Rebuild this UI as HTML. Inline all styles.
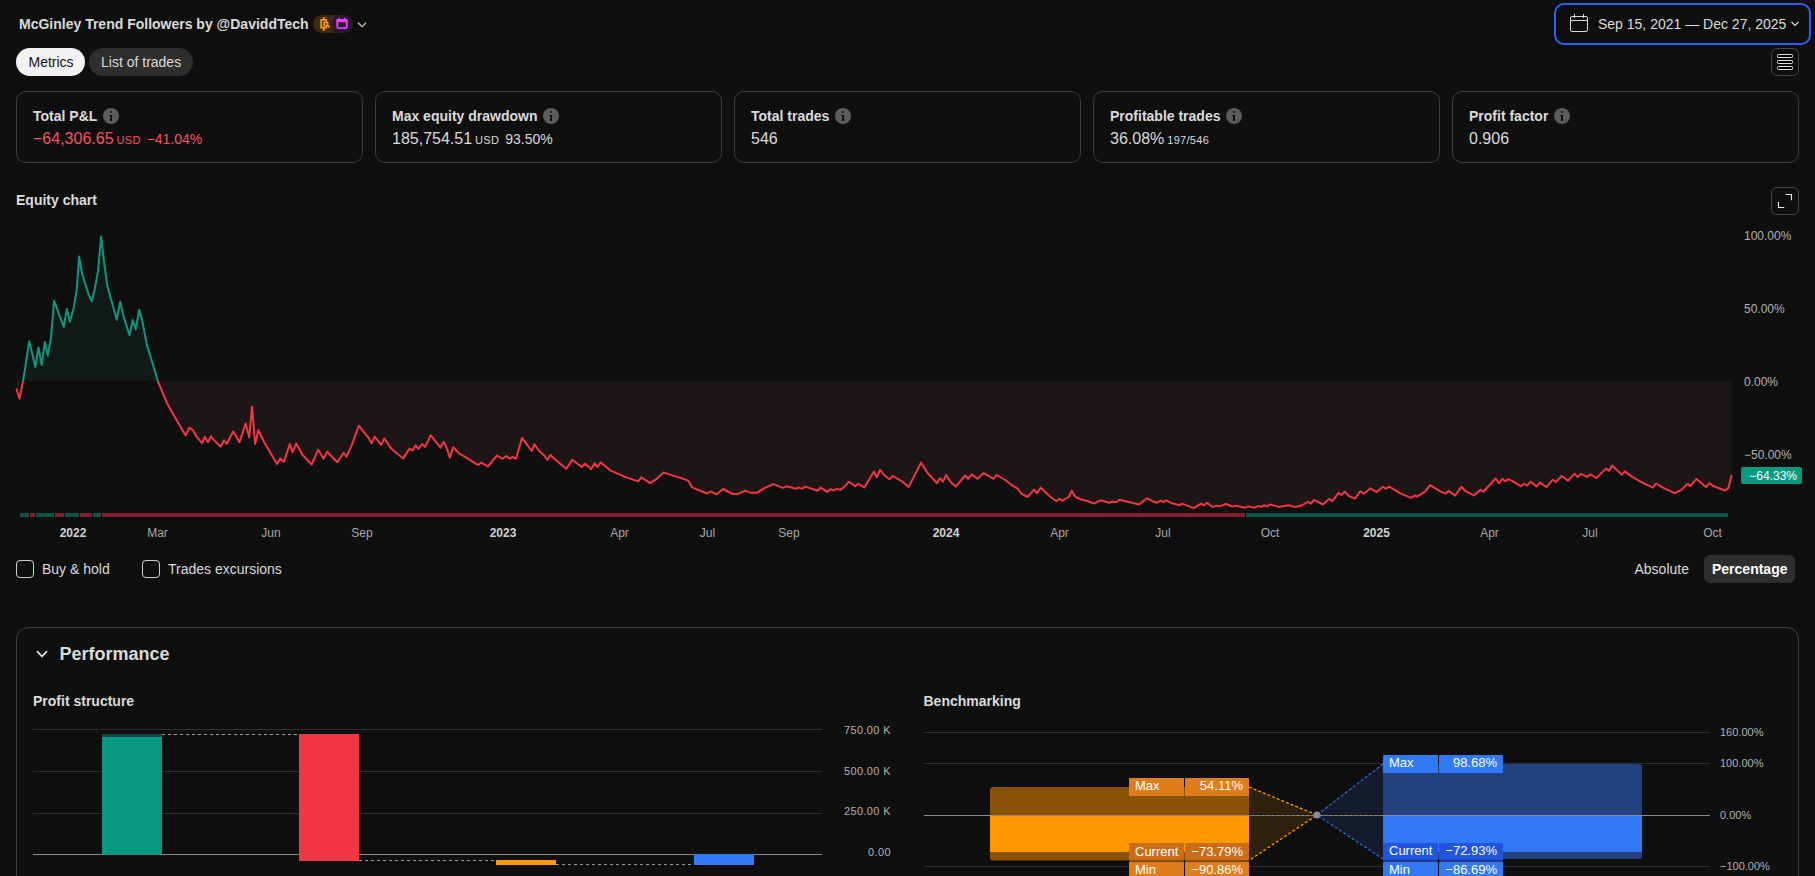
<!DOCTYPE html>
<html><head><meta charset="utf-8"><title>Strategy report</title>
<style>
html,body{margin:0;padding:0;background:#0f0f0f;width:1815px;height:876px;overflow:hidden;position:relative;font-family:"Liberation Sans", sans-serif;}
.t{position:absolute;white-space:nowrap;}
.info{display:inline-block;width:16px;height:16px;border-radius:50%;background:#5c5c5c;margin-left:6px;vertical-align:-3px;position:relative;}
.info:before{content:"";position:absolute;left:7px;top:3.3px;width:2px;height:2px;background:#111;border-radius:1px}
.info:after{content:"";position:absolute;left:5.8px;top:7.3px;width:3.2px;height:5.5px;background:linear-gradient(#111,#111) left top/1.3px 1.2px no-repeat,linear-gradient(#111,#111) right top/2px 100% no-repeat}
</style></head><body>
<div class="t" style="left:19px;top:17.15px;font-size:14px;line-height:14px;font-weight:700;color:#dbdbdb;">McGinley Trend Followers by @DaviddTech</div>
<div style="position:absolute;left:313px;top:15px;width:40px;height:18px;box-sizing:border-box;border-radius:9px;background:linear-gradient(90deg,#3a2a0e 50%,#2e1733 50%)"></div>
<svg style="position:absolute;left:313px;top:15px" width="40" height="18" viewBox="0 0 40 18">
<g fill="none" stroke="#ff9800" stroke-width="1.8">
<path d="M10.8 1.9 V4.9 M14.1 4.9 H8.2 V12.7 H14.1 M10.8 12.7 V15.9"/>
<circle cx="12.85" cy="8.9" r="1.9"/><line x1="14.3" y1="10.4" x2="16.6" y2="12.3"/>
</g>
<g fill="none" stroke="#e040fb" stroke-width="1.9">
<rect x="24.35" y="4.95" width="9.4" height="8.2" rx="1.2"/>
</g>
<rect x="23.4" y="4.0" width="11.3" height="3.3" rx="1" fill="#e040fb"/>
<rect x="25.4" y="2.9" width="1.5" height="1.5" fill="#e040fb"/>
<rect x="31.0" y="2.9" width="1.5" height="1.5" fill="#e040fb"/>
</svg>
<svg style="position:absolute;left:357px;top:20.5px" width="10" height="8" viewBox="0 0 10 8"><path d="M1 1.8 L5 5.6 L9 1.8" fill="none" stroke="#c8c8c8" stroke-width="1.3"/></svg>
<div style="position:absolute;left:1554px;top:3px;width:257px;height:42px;box-sizing:border-box;border:2px solid #2962ff;border-radius:10px"></div>
<svg style="position:absolute;left:1569px;top:13px" width="20" height="20" viewBox="0 0 20 20">
<rect x="1.5" y="3.5" width="17" height="15" rx="1.5" fill="none" stroke="#dbdbdb" stroke-width="1"/>
<line x1="1.5" y1="7.5" x2="18.5" y2="7.5" stroke="#dbdbdb" stroke-width="1"/>
<line x1="5.5" y1="1" x2="5.5" y2="5" stroke="#dbdbdb" stroke-width="1"/>
<line x1="14.5" y1="1" x2="14.5" y2="5" stroke="#dbdbdb" stroke-width="1"/>
</svg>
<div class="t" style="left:1598px;top:17.15px;font-size:14px;line-height:14px;font-weight:400;color:#dbdbdb;">Sep 15, 2021 — Dec 27, 2025</div>
<svg style="position:absolute;left:1790px;top:20px" width="10" height="8" viewBox="0 0 10 8"><path d="M1.5 2 L5 5.5 L8.5 2" fill="none" stroke="#dbdbdb" stroke-width="1.2"/></svg>
<div style="position:absolute;left:16px;top:48px;width:69px;height:28px;box-sizing:border-box;border-radius:14px;background:#f2f2f2"></div>
<div class="t" style="left:28.5px;top:54.65px;font-size:14px;line-height:14px;font-weight:400;color:#131313;">Metrics</div>
<div style="position:absolute;left:89px;top:48px;width:104px;height:28px;box-sizing:border-box;border-radius:14px;background:#2e2e2e"></div>
<div class="t" style="left:101px;top:54.65px;font-size:14px;line-height:14px;font-weight:400;color:#dbdbdb;">List of trades</div>
<div style="position:absolute;left:1771px;top:48px;width:28px;height:28px;box-sizing:border-box;border:1px solid #444;border-radius:6px"></div>
<svg style="position:absolute;left:1771px;top:48px" width="28" height="28" viewBox="0 0 28 28">
<g fill="none" stroke="#e0e0e0" stroke-width="1">
<rect x="6.5" y="6.5" width="15" height="3" rx="0.8" fill="#000"/>
<rect x="6.5" y="12.5" width="15" height="3" rx="0.8" fill="#000"/>
<rect x="6.5" y="18.5" width="15" height="3" rx="0.8" fill="#000"/>
</g></svg>
<div style="position:absolute;left:16px;top:91px;width:347px;height:72px;box-sizing:border-box;border:1px solid #3d3d3d;border-radius:10px"></div>
<div class="t" style="left:33px;top:108.15px;font-size:14px;line-height:14px;font-weight:700;color:#dbdbdb">Total P&amp;L<span class="info"></span></div>
<div class="t" style="left:33px;top:131.46px;font-size:16px;line-height:16px;color:#dbdbdb"><span style="font-size:16px;color:#f7525f;margin-left:0px;">−64,306.65</span><span style="font-size:11px;color:#f7525f;margin-left:3px;letter-spacing:0.3px;">USD</span><span style="font-size:14px;color:#f7525f;margin-left:6px;">−41.04%</span></div>
<div style="position:absolute;left:375px;top:91px;width:347px;height:72px;box-sizing:border-box;border:1px solid #3d3d3d;border-radius:10px"></div>
<div class="t" style="left:392px;top:108.15px;font-size:14px;line-height:14px;font-weight:700;color:#dbdbdb">Max equity drawdown<span class="info"></span></div>
<div class="t" style="left:392px;top:131.46px;font-size:16px;line-height:16px;color:#dbdbdb"><span style="font-size:16px;color:#dbdbdb;margin-left:0px;">185,754.51</span><span style="font-size:11px;color:#dbdbdb;margin-left:3px;letter-spacing:0.3px;">USD</span><span style="font-size:14px;color:#dbdbdb;margin-left:6px;">93.50%</span></div>
<div style="position:absolute;left:734px;top:91px;width:347px;height:72px;box-sizing:border-box;border:1px solid #3d3d3d;border-radius:10px"></div>
<div class="t" style="left:751px;top:108.15px;font-size:14px;line-height:14px;font-weight:700;color:#dbdbdb">Total trades<span class="info"></span></div>
<div class="t" style="left:751px;top:131.46px;font-size:16px;line-height:16px;color:#dbdbdb"><span style="font-size:16px;color:#dbdbdb;margin-left:0px;">546</span></div>
<div style="position:absolute;left:1093px;top:91px;width:347px;height:72px;box-sizing:border-box;border:1px solid #3d3d3d;border-radius:10px"></div>
<div class="t" style="left:1110px;top:108.15px;font-size:14px;line-height:14px;font-weight:700;color:#dbdbdb">Profitable trades<span class="info"></span></div>
<div class="t" style="left:1110px;top:131.46px;font-size:16px;line-height:16px;color:#dbdbdb"><span style="font-size:16px;color:#dbdbdb;margin-left:0px;">36.08%</span><span style="font-size:11px;color:#dbdbdb;margin-left:3px;letter-spacing:0.3px;">197/546</span></div>
<div style="position:absolute;left:1452px;top:91px;width:347px;height:72px;box-sizing:border-box;border:1px solid #3d3d3d;border-radius:10px"></div>
<div class="t" style="left:1469px;top:108.15px;font-size:14px;line-height:14px;font-weight:700;color:#dbdbdb">Profit factor<span class="info"></span></div>
<div class="t" style="left:1469px;top:131.46px;font-size:16px;line-height:16px;color:#dbdbdb"><span style="font-size:16px;color:#dbdbdb;margin-left:0px;">0.906</span></div>
<div class="t" style="left:16px;top:193.15px;font-size:14px;line-height:14px;font-weight:700;color:#dbdbdb;">Equity chart</div>
<div style="position:absolute;left:1771px;top:187px;width:28px;height:28px;box-sizing:border-box;border:1px solid #444;border-radius:6px"></div>
<svg style="position:absolute;left:1771px;top:187px" width="28" height="28" viewBox="0 0 28 28">
<path d="M7.5 15 V20.5 H13.2" fill="none" stroke="#e8e8e8" stroke-width="1.1"/>
<path d="M14.8 7.5 H20.5 V13.2" fill="none" stroke="#e8e8e8" stroke-width="1.1"/>
</svg>
<svg style="position:absolute;left:0;top:0" width="1815" height="560" viewBox="0 0 1815 560">
<defs>
<clipPath id="up"><rect x="0" y="0" width="1815" height="381"/></clipPath>
<clipPath id="dn"><rect x="0" y="381" width="1815" height="200"/></clipPath>
</defs>
<path d="M16.4,388.5 L19.5,398.8 L23.0,381.4 L29.2,341.3 L35.4,367.0 L38.4,347.4 L41.7,365.0 L44.8,342.0 L47.9,355.7 L51.0,337.2 L54.1,300.8 L63.7,326.9 L66.8,309.0 L69.9,321.7 L73.6,308.4 L76.7,289.9 L79.1,256.6 L82.2,274.5 L88.8,295.0 L91.9,301.2 L95.0,287.8 L98.0,271.4 L101.1,236.4 L104.2,263.2 L107.3,285.8 L116.8,319.7 L120.2,301.8 L123.3,315.6 L129.5,335.1 L132.6,320.1 L135.7,329.4 L139.2,309.8 L142.2,320.7 L147.0,345.4 L152.1,361.8 L157.9,381.4 L167.4,403.8 L171.9,412.0 L185.6,435.4 L189.3,427.6 L193.0,430.3 L196.6,436.7 L202.1,443.1 L204.8,436.7 L208.1,442.2 L210.8,436.3 L216.7,443.1 L220.7,446.7 L224.0,440.3 L226.7,444.0 L233.1,431.6 L239.5,442.2 L245.6,423.5 L249.2,437.6 L252.0,406.5 L255.1,444.0 L258.4,430.3 L264.2,442.2 L277.0,464.1 L280.3,458.6 L283.9,461.9 L289.8,444.0 L292.5,452.2 L296.2,443.6 L302.6,455.0 L311.7,464.5 L318.1,449.8 L323.6,458.6 L327.2,451.7 L337.3,462.3 L343.7,452.8 L346.4,456.8 L351.9,444.9 L358.8,425.7 L368.3,437.6 L371.6,443.1 L374.7,436.7 L381.1,444.9 L384.4,438.5 L391.2,448.6 L403.1,458.6 L409.5,448.6 L412.6,450.4 L415.5,445.5 L418.6,448.9 L422.2,444.0 L425.0,447.1 L430.8,435.4 L440.5,447.7 L443.8,441.8 L446.6,448.0 L449.9,457.6 L453.2,447.2 L459.0,453.3 L465.6,457.1 L475.5,463.7 L478.0,464.9 L481.3,462.6 L487.9,466.5 L497.0,455.5 L502.8,458.8 L506.4,456.0 L509.8,458.8 L512.7,456.8 L516.0,458.8 L522.1,437.8 L531.7,451.0 L534.5,444.2 L538.8,450.5 L544.1,455.5 L547.4,459.9 L550.4,455.0 L554.9,459.3 L560.7,464.2 L566.4,468.7 L572.2,459.9 L581.8,467.0 L585.1,463.7 L591.2,469.2 L594.5,463.2 L597.4,467.0 L600.7,462.4 L610.2,470.3 L625.1,476.9 L638.3,481.4 L641.3,477.4 L650.2,483.2 L656.5,479.1 L663.5,472.5 L674.7,476.1 L686.3,479.8 L688.8,481.4 L692.1,487.4 L707.0,493.5 L710.6,491.5 L716.9,494.3 L723.0,489.0 L732.6,494.0 L738.6,493.7 L745.2,490.7 L751.5,492.9 L757.3,492.6 L763.9,488.3 L773.3,484.1 L782.9,487.9 L786.6,486.3 L795.8,488.8 L798.6,487.4 L801.9,488.8 L805.2,486.6 L817.6,490.7 L820.6,487.6 L823.4,489.3 L827.2,492.1 L830.5,489.3 L833.3,490.4 L836.7,488.8 L840.3,489.9 L844.1,487.1 L849.0,481.7 L855.3,486.3 L858.1,483.8 L864.3,487.4 L873.8,471.7 L876.8,477.2 L880.1,469.8 L884.6,475.5 L889.5,479.2 L892.9,476.0 L901.9,481.3 L908.6,487.1 L921.0,462.6 L927.6,473.1 L937.0,483.3 L940.0,478.3 L942.9,481.7 L946.2,475.0 L950.7,482.1 L955.7,486.6 L965.2,475.5 L968.1,478.8 L971.7,474.4 L977.6,478.8 L983.8,473.1 L993.7,478.8 L996.5,475.0 L1005.2,480.0 L1010.7,484.3 L1018.0,488.8 L1021.3,493.7 L1027.6,497.0 L1034.1,489.6 L1036.9,493.2 L1040.7,487.6 L1045.7,492.6 L1050.7,497.0 L1056.4,501.2 L1059.4,498.7 L1062.2,500.7 L1068.8,497.0 L1071.7,490.7 L1075.5,497.0 L1081.2,499.5 L1087.9,501.2 L1094.1,503.6 L1100.2,500.3 L1109.3,502.8 L1112.6,501.5 L1116.0,502.3 L1119.3,499.8 L1139.1,504.5 L1147.0,498.2 L1152.3,501.2 L1156.9,502.8 L1160.6,500.7 L1163.6,502.0 L1165.9,500.3 L1172.1,503.3 L1179.6,505.3 L1182.1,503.6 L1193.6,508.1 L1201.1,503.6 L1203.9,505.3 L1206.9,502.8 L1212.6,506.9 L1216.8,505.6 L1219.3,506.4 L1225.9,504.0 L1232.5,506.6 L1235.8,505.6 L1244.9,507.8 L1248.2,506.4 L1254.0,507.8 L1258.1,506.1 L1261.4,506.9 L1263.9,505.3 L1267.2,506.4 L1269.7,504.5 L1278.8,506.9 L1288.7,505.3 L1294.5,506.9 L1301.1,505.8 L1307.7,502.0 L1311.0,503.6 L1314.0,499.8 L1322.9,504.5 L1329.1,499.0 L1332.4,501.2 L1338.6,492.9 L1341.5,495.0 L1344.8,491.6 L1349.0,496.2 L1354.8,498.7 L1360.5,491.2 L1363.8,493.7 L1370.5,488.3 L1376.6,492.1 L1382.9,486.8 L1385.8,488.8 L1389.1,486.6 L1401.0,493.7 L1411.0,497.9 L1415.1,495.4 L1417.2,496.7 L1425.0,491.6 L1430.0,485.1 L1440.7,491.6 L1445.7,493.7 L1448.6,490.9 L1455.1,495.7 L1461.4,486.8 L1465.5,491.2 L1473.8,495.4 L1480.7,489.9 L1483.3,491.7 L1495.6,478.5 L1498.9,483.3 L1502.2,478.8 L1505.2,481.3 L1508.5,479.2 L1513.4,481.7 L1520.9,486.3 L1524.2,483.8 L1527.0,485.5 L1530.8,481.7 L1536.6,486.6 L1539.9,482.6 L1546.5,487.1 L1552.8,479.7 L1555.6,482.1 L1561.7,476.0 L1568.0,480.8 L1574.6,473.6 L1577.9,477.2 L1580.9,473.9 L1587.0,476.9 L1590.3,474.4 L1596.4,478.0 L1606.0,468.6 L1609.0,470.9 L1612.1,465.6 L1621.8,474.7 L1624.9,471.4 L1632.1,476.9 L1643.7,483.3 L1653.0,487.6 L1656.0,483.5 L1662.4,487.4 L1674.5,493.1 L1681.1,490.1 L1687.5,483.9 L1690.3,486.1 L1696.5,478.9 L1706.2,487.2 L1709.4,483.0 L1712.5,485.7 L1725.0,490.5 L1728.5,487.9 L1731.6,475.0 L1731.6,381 L16.4,381 Z" fill="#121a19" clip-path="url(#up)"/>
<path d="M16.4,388.5 L19.5,398.8 L23.0,381.4 L29.2,341.3 L35.4,367.0 L38.4,347.4 L41.7,365.0 L44.8,342.0 L47.9,355.7 L51.0,337.2 L54.1,300.8 L63.7,326.9 L66.8,309.0 L69.9,321.7 L73.6,308.4 L76.7,289.9 L79.1,256.6 L82.2,274.5 L88.8,295.0 L91.9,301.2 L95.0,287.8 L98.0,271.4 L101.1,236.4 L104.2,263.2 L107.3,285.8 L116.8,319.7 L120.2,301.8 L123.3,315.6 L129.5,335.1 L132.6,320.1 L135.7,329.4 L139.2,309.8 L142.2,320.7 L147.0,345.4 L152.1,361.8 L157.9,381.4 L167.4,403.8 L171.9,412.0 L185.6,435.4 L189.3,427.6 L193.0,430.3 L196.6,436.7 L202.1,443.1 L204.8,436.7 L208.1,442.2 L210.8,436.3 L216.7,443.1 L220.7,446.7 L224.0,440.3 L226.7,444.0 L233.1,431.6 L239.5,442.2 L245.6,423.5 L249.2,437.6 L252.0,406.5 L255.1,444.0 L258.4,430.3 L264.2,442.2 L277.0,464.1 L280.3,458.6 L283.9,461.9 L289.8,444.0 L292.5,452.2 L296.2,443.6 L302.6,455.0 L311.7,464.5 L318.1,449.8 L323.6,458.6 L327.2,451.7 L337.3,462.3 L343.7,452.8 L346.4,456.8 L351.9,444.9 L358.8,425.7 L368.3,437.6 L371.6,443.1 L374.7,436.7 L381.1,444.9 L384.4,438.5 L391.2,448.6 L403.1,458.6 L409.5,448.6 L412.6,450.4 L415.5,445.5 L418.6,448.9 L422.2,444.0 L425.0,447.1 L430.8,435.4 L440.5,447.7 L443.8,441.8 L446.6,448.0 L449.9,457.6 L453.2,447.2 L459.0,453.3 L465.6,457.1 L475.5,463.7 L478.0,464.9 L481.3,462.6 L487.9,466.5 L497.0,455.5 L502.8,458.8 L506.4,456.0 L509.8,458.8 L512.7,456.8 L516.0,458.8 L522.1,437.8 L531.7,451.0 L534.5,444.2 L538.8,450.5 L544.1,455.5 L547.4,459.9 L550.4,455.0 L554.9,459.3 L560.7,464.2 L566.4,468.7 L572.2,459.9 L581.8,467.0 L585.1,463.7 L591.2,469.2 L594.5,463.2 L597.4,467.0 L600.7,462.4 L610.2,470.3 L625.1,476.9 L638.3,481.4 L641.3,477.4 L650.2,483.2 L656.5,479.1 L663.5,472.5 L674.7,476.1 L686.3,479.8 L688.8,481.4 L692.1,487.4 L707.0,493.5 L710.6,491.5 L716.9,494.3 L723.0,489.0 L732.6,494.0 L738.6,493.7 L745.2,490.7 L751.5,492.9 L757.3,492.6 L763.9,488.3 L773.3,484.1 L782.9,487.9 L786.6,486.3 L795.8,488.8 L798.6,487.4 L801.9,488.8 L805.2,486.6 L817.6,490.7 L820.6,487.6 L823.4,489.3 L827.2,492.1 L830.5,489.3 L833.3,490.4 L836.7,488.8 L840.3,489.9 L844.1,487.1 L849.0,481.7 L855.3,486.3 L858.1,483.8 L864.3,487.4 L873.8,471.7 L876.8,477.2 L880.1,469.8 L884.6,475.5 L889.5,479.2 L892.9,476.0 L901.9,481.3 L908.6,487.1 L921.0,462.6 L927.6,473.1 L937.0,483.3 L940.0,478.3 L942.9,481.7 L946.2,475.0 L950.7,482.1 L955.7,486.6 L965.2,475.5 L968.1,478.8 L971.7,474.4 L977.6,478.8 L983.8,473.1 L993.7,478.8 L996.5,475.0 L1005.2,480.0 L1010.7,484.3 L1018.0,488.8 L1021.3,493.7 L1027.6,497.0 L1034.1,489.6 L1036.9,493.2 L1040.7,487.6 L1045.7,492.6 L1050.7,497.0 L1056.4,501.2 L1059.4,498.7 L1062.2,500.7 L1068.8,497.0 L1071.7,490.7 L1075.5,497.0 L1081.2,499.5 L1087.9,501.2 L1094.1,503.6 L1100.2,500.3 L1109.3,502.8 L1112.6,501.5 L1116.0,502.3 L1119.3,499.8 L1139.1,504.5 L1147.0,498.2 L1152.3,501.2 L1156.9,502.8 L1160.6,500.7 L1163.6,502.0 L1165.9,500.3 L1172.1,503.3 L1179.6,505.3 L1182.1,503.6 L1193.6,508.1 L1201.1,503.6 L1203.9,505.3 L1206.9,502.8 L1212.6,506.9 L1216.8,505.6 L1219.3,506.4 L1225.9,504.0 L1232.5,506.6 L1235.8,505.6 L1244.9,507.8 L1248.2,506.4 L1254.0,507.8 L1258.1,506.1 L1261.4,506.9 L1263.9,505.3 L1267.2,506.4 L1269.7,504.5 L1278.8,506.9 L1288.7,505.3 L1294.5,506.9 L1301.1,505.8 L1307.7,502.0 L1311.0,503.6 L1314.0,499.8 L1322.9,504.5 L1329.1,499.0 L1332.4,501.2 L1338.6,492.9 L1341.5,495.0 L1344.8,491.6 L1349.0,496.2 L1354.8,498.7 L1360.5,491.2 L1363.8,493.7 L1370.5,488.3 L1376.6,492.1 L1382.9,486.8 L1385.8,488.8 L1389.1,486.6 L1401.0,493.7 L1411.0,497.9 L1415.1,495.4 L1417.2,496.7 L1425.0,491.6 L1430.0,485.1 L1440.7,491.6 L1445.7,493.7 L1448.6,490.9 L1455.1,495.7 L1461.4,486.8 L1465.5,491.2 L1473.8,495.4 L1480.7,489.9 L1483.3,491.7 L1495.6,478.5 L1498.9,483.3 L1502.2,478.8 L1505.2,481.3 L1508.5,479.2 L1513.4,481.7 L1520.9,486.3 L1524.2,483.8 L1527.0,485.5 L1530.8,481.7 L1536.6,486.6 L1539.9,482.6 L1546.5,487.1 L1552.8,479.7 L1555.6,482.1 L1561.7,476.0 L1568.0,480.8 L1574.6,473.6 L1577.9,477.2 L1580.9,473.9 L1587.0,476.9 L1590.3,474.4 L1596.4,478.0 L1606.0,468.6 L1609.0,470.9 L1612.1,465.6 L1621.8,474.7 L1624.9,471.4 L1632.1,476.9 L1643.7,483.3 L1653.0,487.6 L1656.0,483.5 L1662.4,487.4 L1674.5,493.1 L1681.1,490.1 L1687.5,483.9 L1690.3,486.1 L1696.5,478.9 L1706.2,487.2 L1709.4,483.0 L1712.5,485.7 L1725.0,490.5 L1728.5,487.9 L1731.6,475.0 L1731.6,381 L16.4,381 Z" fill="#1d1616" clip-path="url(#dn)"/>
<path d="M16.4,388.5 L19.5,398.8 L23.0,381.4 L29.2,341.3 L35.4,367.0 L38.4,347.4 L41.7,365.0 L44.8,342.0 L47.9,355.7 L51.0,337.2 L54.1,300.8 L63.7,326.9 L66.8,309.0 L69.9,321.7 L73.6,308.4 L76.7,289.9 L79.1,256.6 L82.2,274.5 L88.8,295.0 L91.9,301.2 L95.0,287.8 L98.0,271.4 L101.1,236.4 L104.2,263.2 L107.3,285.8 L116.8,319.7 L120.2,301.8 L123.3,315.6 L129.5,335.1 L132.6,320.1 L135.7,329.4 L139.2,309.8 L142.2,320.7 L147.0,345.4 L152.1,361.8 L157.9,381.4 L167.4,403.8 L171.9,412.0 L185.6,435.4 L189.3,427.6 L193.0,430.3 L196.6,436.7 L202.1,443.1 L204.8,436.7 L208.1,442.2 L210.8,436.3 L216.7,443.1 L220.7,446.7 L224.0,440.3 L226.7,444.0 L233.1,431.6 L239.5,442.2 L245.6,423.5 L249.2,437.6 L252.0,406.5 L255.1,444.0 L258.4,430.3 L264.2,442.2 L277.0,464.1 L280.3,458.6 L283.9,461.9 L289.8,444.0 L292.5,452.2 L296.2,443.6 L302.6,455.0 L311.7,464.5 L318.1,449.8 L323.6,458.6 L327.2,451.7 L337.3,462.3 L343.7,452.8 L346.4,456.8 L351.9,444.9 L358.8,425.7 L368.3,437.6 L371.6,443.1 L374.7,436.7 L381.1,444.9 L384.4,438.5 L391.2,448.6 L403.1,458.6 L409.5,448.6 L412.6,450.4 L415.5,445.5 L418.6,448.9 L422.2,444.0 L425.0,447.1 L430.8,435.4 L440.5,447.7 L443.8,441.8 L446.6,448.0 L449.9,457.6 L453.2,447.2 L459.0,453.3 L465.6,457.1 L475.5,463.7 L478.0,464.9 L481.3,462.6 L487.9,466.5 L497.0,455.5 L502.8,458.8 L506.4,456.0 L509.8,458.8 L512.7,456.8 L516.0,458.8 L522.1,437.8 L531.7,451.0 L534.5,444.2 L538.8,450.5 L544.1,455.5 L547.4,459.9 L550.4,455.0 L554.9,459.3 L560.7,464.2 L566.4,468.7 L572.2,459.9 L581.8,467.0 L585.1,463.7 L591.2,469.2 L594.5,463.2 L597.4,467.0 L600.7,462.4 L610.2,470.3 L625.1,476.9 L638.3,481.4 L641.3,477.4 L650.2,483.2 L656.5,479.1 L663.5,472.5 L674.7,476.1 L686.3,479.8 L688.8,481.4 L692.1,487.4 L707.0,493.5 L710.6,491.5 L716.9,494.3 L723.0,489.0 L732.6,494.0 L738.6,493.7 L745.2,490.7 L751.5,492.9 L757.3,492.6 L763.9,488.3 L773.3,484.1 L782.9,487.9 L786.6,486.3 L795.8,488.8 L798.6,487.4 L801.9,488.8 L805.2,486.6 L817.6,490.7 L820.6,487.6 L823.4,489.3 L827.2,492.1 L830.5,489.3 L833.3,490.4 L836.7,488.8 L840.3,489.9 L844.1,487.1 L849.0,481.7 L855.3,486.3 L858.1,483.8 L864.3,487.4 L873.8,471.7 L876.8,477.2 L880.1,469.8 L884.6,475.5 L889.5,479.2 L892.9,476.0 L901.9,481.3 L908.6,487.1 L921.0,462.6 L927.6,473.1 L937.0,483.3 L940.0,478.3 L942.9,481.7 L946.2,475.0 L950.7,482.1 L955.7,486.6 L965.2,475.5 L968.1,478.8 L971.7,474.4 L977.6,478.8 L983.8,473.1 L993.7,478.8 L996.5,475.0 L1005.2,480.0 L1010.7,484.3 L1018.0,488.8 L1021.3,493.7 L1027.6,497.0 L1034.1,489.6 L1036.9,493.2 L1040.7,487.6 L1045.7,492.6 L1050.7,497.0 L1056.4,501.2 L1059.4,498.7 L1062.2,500.7 L1068.8,497.0 L1071.7,490.7 L1075.5,497.0 L1081.2,499.5 L1087.9,501.2 L1094.1,503.6 L1100.2,500.3 L1109.3,502.8 L1112.6,501.5 L1116.0,502.3 L1119.3,499.8 L1139.1,504.5 L1147.0,498.2 L1152.3,501.2 L1156.9,502.8 L1160.6,500.7 L1163.6,502.0 L1165.9,500.3 L1172.1,503.3 L1179.6,505.3 L1182.1,503.6 L1193.6,508.1 L1201.1,503.6 L1203.9,505.3 L1206.9,502.8 L1212.6,506.9 L1216.8,505.6 L1219.3,506.4 L1225.9,504.0 L1232.5,506.6 L1235.8,505.6 L1244.9,507.8 L1248.2,506.4 L1254.0,507.8 L1258.1,506.1 L1261.4,506.9 L1263.9,505.3 L1267.2,506.4 L1269.7,504.5 L1278.8,506.9 L1288.7,505.3 L1294.5,506.9 L1301.1,505.8 L1307.7,502.0 L1311.0,503.6 L1314.0,499.8 L1322.9,504.5 L1329.1,499.0 L1332.4,501.2 L1338.6,492.9 L1341.5,495.0 L1344.8,491.6 L1349.0,496.2 L1354.8,498.7 L1360.5,491.2 L1363.8,493.7 L1370.5,488.3 L1376.6,492.1 L1382.9,486.8 L1385.8,488.8 L1389.1,486.6 L1401.0,493.7 L1411.0,497.9 L1415.1,495.4 L1417.2,496.7 L1425.0,491.6 L1430.0,485.1 L1440.7,491.6 L1445.7,493.7 L1448.6,490.9 L1455.1,495.7 L1461.4,486.8 L1465.5,491.2 L1473.8,495.4 L1480.7,489.9 L1483.3,491.7 L1495.6,478.5 L1498.9,483.3 L1502.2,478.8 L1505.2,481.3 L1508.5,479.2 L1513.4,481.7 L1520.9,486.3 L1524.2,483.8 L1527.0,485.5 L1530.8,481.7 L1536.6,486.6 L1539.9,482.6 L1546.5,487.1 L1552.8,479.7 L1555.6,482.1 L1561.7,476.0 L1568.0,480.8 L1574.6,473.6 L1577.9,477.2 L1580.9,473.9 L1587.0,476.9 L1590.3,474.4 L1596.4,478.0 L1606.0,468.6 L1609.0,470.9 L1612.1,465.6 L1621.8,474.7 L1624.9,471.4 L1632.1,476.9 L1643.7,483.3 L1653.0,487.6 L1656.0,483.5 L1662.4,487.4 L1674.5,493.1 L1681.1,490.1 L1687.5,483.9 L1690.3,486.1 L1696.5,478.9 L1706.2,487.2 L1709.4,483.0 L1712.5,485.7 L1725.0,490.5 L1728.5,487.9 L1731.6,475.0" fill="none" stroke="#089981" stroke-width="2" stroke-linejoin="round" clip-path="url(#up)"/>
<path d="M16.4,388.5 L19.5,398.8 L23.0,381.4 L29.2,341.3 L35.4,367.0 L38.4,347.4 L41.7,365.0 L44.8,342.0 L47.9,355.7 L51.0,337.2 L54.1,300.8 L63.7,326.9 L66.8,309.0 L69.9,321.7 L73.6,308.4 L76.7,289.9 L79.1,256.6 L82.2,274.5 L88.8,295.0 L91.9,301.2 L95.0,287.8 L98.0,271.4 L101.1,236.4 L104.2,263.2 L107.3,285.8 L116.8,319.7 L120.2,301.8 L123.3,315.6 L129.5,335.1 L132.6,320.1 L135.7,329.4 L139.2,309.8 L142.2,320.7 L147.0,345.4 L152.1,361.8 L157.9,381.4 L167.4,403.8 L171.9,412.0 L185.6,435.4 L189.3,427.6 L193.0,430.3 L196.6,436.7 L202.1,443.1 L204.8,436.7 L208.1,442.2 L210.8,436.3 L216.7,443.1 L220.7,446.7 L224.0,440.3 L226.7,444.0 L233.1,431.6 L239.5,442.2 L245.6,423.5 L249.2,437.6 L252.0,406.5 L255.1,444.0 L258.4,430.3 L264.2,442.2 L277.0,464.1 L280.3,458.6 L283.9,461.9 L289.8,444.0 L292.5,452.2 L296.2,443.6 L302.6,455.0 L311.7,464.5 L318.1,449.8 L323.6,458.6 L327.2,451.7 L337.3,462.3 L343.7,452.8 L346.4,456.8 L351.9,444.9 L358.8,425.7 L368.3,437.6 L371.6,443.1 L374.7,436.7 L381.1,444.9 L384.4,438.5 L391.2,448.6 L403.1,458.6 L409.5,448.6 L412.6,450.4 L415.5,445.5 L418.6,448.9 L422.2,444.0 L425.0,447.1 L430.8,435.4 L440.5,447.7 L443.8,441.8 L446.6,448.0 L449.9,457.6 L453.2,447.2 L459.0,453.3 L465.6,457.1 L475.5,463.7 L478.0,464.9 L481.3,462.6 L487.9,466.5 L497.0,455.5 L502.8,458.8 L506.4,456.0 L509.8,458.8 L512.7,456.8 L516.0,458.8 L522.1,437.8 L531.7,451.0 L534.5,444.2 L538.8,450.5 L544.1,455.5 L547.4,459.9 L550.4,455.0 L554.9,459.3 L560.7,464.2 L566.4,468.7 L572.2,459.9 L581.8,467.0 L585.1,463.7 L591.2,469.2 L594.5,463.2 L597.4,467.0 L600.7,462.4 L610.2,470.3 L625.1,476.9 L638.3,481.4 L641.3,477.4 L650.2,483.2 L656.5,479.1 L663.5,472.5 L674.7,476.1 L686.3,479.8 L688.8,481.4 L692.1,487.4 L707.0,493.5 L710.6,491.5 L716.9,494.3 L723.0,489.0 L732.6,494.0 L738.6,493.7 L745.2,490.7 L751.5,492.9 L757.3,492.6 L763.9,488.3 L773.3,484.1 L782.9,487.9 L786.6,486.3 L795.8,488.8 L798.6,487.4 L801.9,488.8 L805.2,486.6 L817.6,490.7 L820.6,487.6 L823.4,489.3 L827.2,492.1 L830.5,489.3 L833.3,490.4 L836.7,488.8 L840.3,489.9 L844.1,487.1 L849.0,481.7 L855.3,486.3 L858.1,483.8 L864.3,487.4 L873.8,471.7 L876.8,477.2 L880.1,469.8 L884.6,475.5 L889.5,479.2 L892.9,476.0 L901.9,481.3 L908.6,487.1 L921.0,462.6 L927.6,473.1 L937.0,483.3 L940.0,478.3 L942.9,481.7 L946.2,475.0 L950.7,482.1 L955.7,486.6 L965.2,475.5 L968.1,478.8 L971.7,474.4 L977.6,478.8 L983.8,473.1 L993.7,478.8 L996.5,475.0 L1005.2,480.0 L1010.7,484.3 L1018.0,488.8 L1021.3,493.7 L1027.6,497.0 L1034.1,489.6 L1036.9,493.2 L1040.7,487.6 L1045.7,492.6 L1050.7,497.0 L1056.4,501.2 L1059.4,498.7 L1062.2,500.7 L1068.8,497.0 L1071.7,490.7 L1075.5,497.0 L1081.2,499.5 L1087.9,501.2 L1094.1,503.6 L1100.2,500.3 L1109.3,502.8 L1112.6,501.5 L1116.0,502.3 L1119.3,499.8 L1139.1,504.5 L1147.0,498.2 L1152.3,501.2 L1156.9,502.8 L1160.6,500.7 L1163.6,502.0 L1165.9,500.3 L1172.1,503.3 L1179.6,505.3 L1182.1,503.6 L1193.6,508.1 L1201.1,503.6 L1203.9,505.3 L1206.9,502.8 L1212.6,506.9 L1216.8,505.6 L1219.3,506.4 L1225.9,504.0 L1232.5,506.6 L1235.8,505.6 L1244.9,507.8 L1248.2,506.4 L1254.0,507.8 L1258.1,506.1 L1261.4,506.9 L1263.9,505.3 L1267.2,506.4 L1269.7,504.5 L1278.8,506.9 L1288.7,505.3 L1294.5,506.9 L1301.1,505.8 L1307.7,502.0 L1311.0,503.6 L1314.0,499.8 L1322.9,504.5 L1329.1,499.0 L1332.4,501.2 L1338.6,492.9 L1341.5,495.0 L1344.8,491.6 L1349.0,496.2 L1354.8,498.7 L1360.5,491.2 L1363.8,493.7 L1370.5,488.3 L1376.6,492.1 L1382.9,486.8 L1385.8,488.8 L1389.1,486.6 L1401.0,493.7 L1411.0,497.9 L1415.1,495.4 L1417.2,496.7 L1425.0,491.6 L1430.0,485.1 L1440.7,491.6 L1445.7,493.7 L1448.6,490.9 L1455.1,495.7 L1461.4,486.8 L1465.5,491.2 L1473.8,495.4 L1480.7,489.9 L1483.3,491.7 L1495.6,478.5 L1498.9,483.3 L1502.2,478.8 L1505.2,481.3 L1508.5,479.2 L1513.4,481.7 L1520.9,486.3 L1524.2,483.8 L1527.0,485.5 L1530.8,481.7 L1536.6,486.6 L1539.9,482.6 L1546.5,487.1 L1552.8,479.7 L1555.6,482.1 L1561.7,476.0 L1568.0,480.8 L1574.6,473.6 L1577.9,477.2 L1580.9,473.9 L1587.0,476.9 L1590.3,474.4 L1596.4,478.0 L1606.0,468.6 L1609.0,470.9 L1612.1,465.6 L1621.8,474.7 L1624.9,471.4 L1632.1,476.9 L1643.7,483.3 L1653.0,487.6 L1656.0,483.5 L1662.4,487.4 L1674.5,493.1 L1681.1,490.1 L1687.5,483.9 L1690.3,486.1 L1696.5,478.9 L1706.2,487.2 L1709.4,483.0 L1712.5,485.7 L1725.0,490.5 L1728.5,487.9 L1731.6,475.0" fill="none" stroke="#f23645" stroke-width="2" stroke-linejoin="round" clip-path="url(#dn)"/>

<rect x="20" y="513" width="9" height="4" fill="#0c5448"/>
<rect x="30" y="513" width="5" height="4" fill="#82202e"/>
<rect x="36" y="513" width="18" height="4" fill="#0c5448"/>
<rect x="55" y="513" width="9" height="4" fill="#82202e"/>
<rect x="65" y="513" width="14" height="4" fill="#0c5448"/>
<rect x="80" y="513" width="12" height="4" fill="#82202e"/>
<rect x="93" y="513" width="8" height="4" fill="#0c5448"/>
<rect x="102" y="513" width="1143" height="4" fill="#82202e"/>
<rect x="1246" y="513" width="482" height="4" fill="#0c5448"/>
</svg>
<div class="t" style="left:1744px;top:229.84px;font-size:12px;line-height:12px;font-weight:400;color:#b2b2b2;">100.00%</div>
<div class="t" style="left:1744px;top:302.84px;font-size:12px;line-height:12px;font-weight:400;color:#b2b2b2;">50.00%</div>
<div class="t" style="left:1744px;top:375.84px;font-size:12px;line-height:12px;font-weight:400;color:#b2b2b2;">0.00%</div>
<div class="t" style="left:1744px;top:448.84px;font-size:12px;line-height:12px;font-weight:400;color:#b2b2b2;">−50.00%</div>
<div style="position:absolute;left:1741px;top:467px;width:61px;height:17px;box-sizing:border-box;background:#089981;border-radius:2px"></div>
<div class="t" style="right:18px;top:469.84px;font-size:12px;line-height:12px;font-weight:400;color:#ffffff;">−64.33%</div>
<div class="t" style="left:73px;transform:translateX(-50%);top:526.84px;font-size:12px;line-height:12px;font-weight:700;color:#d1d1d1;">2022</div>
<div class="t" style="left:157.5px;transform:translateX(-50%);top:526.84px;font-size:12px;line-height:12px;font-weight:400;color:#a8a8a8;">Mar</div>
<div class="t" style="left:271px;transform:translateX(-50%);top:526.84px;font-size:12px;line-height:12px;font-weight:400;color:#a8a8a8;">Jun</div>
<div class="t" style="left:362px;transform:translateX(-50%);top:526.84px;font-size:12px;line-height:12px;font-weight:400;color:#a8a8a8;">Sep</div>
<div class="t" style="left:503px;transform:translateX(-50%);top:526.84px;font-size:12px;line-height:12px;font-weight:700;color:#d1d1d1;">2023</div>
<div class="t" style="left:619.5px;transform:translateX(-50%);top:526.84px;font-size:12px;line-height:12px;font-weight:400;color:#a8a8a8;">Apr</div>
<div class="t" style="left:707.5px;transform:translateX(-50%);top:526.84px;font-size:12px;line-height:12px;font-weight:400;color:#a8a8a8;">Jul</div>
<div class="t" style="left:789px;transform:translateX(-50%);top:526.84px;font-size:12px;line-height:12px;font-weight:400;color:#a8a8a8;">Sep</div>
<div class="t" style="left:946px;transform:translateX(-50%);top:526.84px;font-size:12px;line-height:12px;font-weight:700;color:#d1d1d1;">2024</div>
<div class="t" style="left:1059.5px;transform:translateX(-50%);top:526.84px;font-size:12px;line-height:12px;font-weight:400;color:#a8a8a8;">Apr</div>
<div class="t" style="left:1163px;transform:translateX(-50%);top:526.84px;font-size:12px;line-height:12px;font-weight:400;color:#a8a8a8;">Jul</div>
<div class="t" style="left:1270px;transform:translateX(-50%);top:526.84px;font-size:12px;line-height:12px;font-weight:400;color:#a8a8a8;">Oct</div>
<div class="t" style="left:1376.5px;transform:translateX(-50%);top:526.84px;font-size:12px;line-height:12px;font-weight:700;color:#d1d1d1;">2025</div>
<div class="t" style="left:1489.5px;transform:translateX(-50%);top:526.84px;font-size:12px;line-height:12px;font-weight:400;color:#a8a8a8;">Apr</div>
<div class="t" style="left:1590px;transform:translateX(-50%);top:526.84px;font-size:12px;line-height:12px;font-weight:400;color:#a8a8a8;">Jul</div>
<div class="t" style="left:1712.5px;transform:translateX(-50%);top:526.84px;font-size:12px;line-height:12px;font-weight:400;color:#a8a8a8;">Oct</div>
<div style="position:absolute;left:16px;top:560px;width:18px;height:18px;box-sizing:border-box;border:1.5px solid #d0d0d0;border-radius:4px"></div>
<div class="t" style="left:42px;top:562.15px;font-size:14px;line-height:14px;font-weight:400;color:#dbdbdb;">Buy &amp; hold</div>
<div style="position:absolute;left:142px;top:560px;width:18px;height:18px;box-sizing:border-box;border:1.5px solid #d0d0d0;border-radius:4px"></div>
<div class="t" style="left:168px;top:562.15px;font-size:14px;line-height:14px;font-weight:400;color:#dbdbdb;">Trades excursions</div>
<div class="t" style="left:1634.5px;top:562.15px;font-size:14px;line-height:14px;font-weight:400;color:#dbdbdb;">Absolute</div>
<div style="position:absolute;left:1704px;top:555px;width:91px;height:28px;box-sizing:border-box;background:#2e2e2e;border-radius:6px"></div>
<div class="t" style="left:1712px;top:562.15px;font-size:14px;line-height:14px;font-weight:700;color:#ffffff;">Percentage</div>
<div style="position:absolute;left:16px;top:627px;width:1783px;height:300px;box-sizing:border-box;border:1px solid #3d3d3d;border-radius:12px"></div>
<svg style="position:absolute;left:35px;top:649px" width="14" height="10" viewBox="0 0 14 10"><path d="M2 2.2 L7 7.4 L12 2.2" fill="none" stroke="#dbdbdb" stroke-width="1.8"/></svg>
<div class="t" style="left:59.5px;top:644.76px;font-size:18px;line-height:18px;font-weight:700;color:#dbdbdb;">Performance</div>
<div class="t" style="left:33px;top:694.15px;font-size:14px;line-height:14px;font-weight:700;color:#dbdbdb;">Profit structure</div>
<div class="t" style="left:923.5px;top:694.15px;font-size:14px;line-height:14px;font-weight:700;color:#dbdbdb;">Benchmarking</div>
<svg style="position:absolute;left:0;top:600px" width="1815" height="276" viewBox="0 600 1815 276">
<line x1="33" y1="729.5" x2="822" y2="729.5" stroke="#2e2e2e" stroke-width="1"/>
<line x1="33" y1="771.5" x2="822" y2="771.5" stroke="#2e2e2e" stroke-width="1"/>
<line x1="33" y1="813.5" x2="822" y2="813.5" stroke="#2e2e2e" stroke-width="1"/>
<line x1="33" y1="854.5" x2="822" y2="854.5" stroke="#8c8c8c" stroke-width="1"/>
<rect x="102" y="734" width="60" height="121" fill="#089981"/><rect x="102" y="734" width="60" height="3" fill="#0b4a40"/>
<rect x="299" y="734" width="60" height="127" fill="#f23645"/>
<rect x="496" y="860" width="60" height="5" fill="#ff9800"/>
<rect x="694" y="854" width="60" height="11" fill="#3179f5"/>
<g stroke="#9a9a9a" stroke-width="1" stroke-dasharray="3 3" fill="none">
<line x1="162" y1="734.5" x2="299" y2="734.5"/><line x1="359" y1="860.5" x2="496" y2="860.5"/><line x1="556" y1="864.5" x2="694" y2="864.5"/>
</g>
</svg>
<div class="t" style="right:924px;top:724.69px;font-size:11px;line-height:11px;font-weight:400;color:#b2b2b2;letter-spacing:0.38px">750.00 K</div>
<div class="t" style="right:924px;top:765.69px;font-size:11px;line-height:11px;font-weight:400;color:#b2b2b2;letter-spacing:0.38px">500.00 K</div>
<div class="t" style="right:924px;top:806.19px;font-size:11px;line-height:11px;font-weight:400;color:#b2b2b2;letter-spacing:0.38px">250.00 K</div>
<div class="t" style="right:924px;top:846.69px;font-size:11px;line-height:11px;font-weight:400;color:#b2b2b2;letter-spacing:0.38px">0.00</div>
<svg style="position:absolute;left:0;top:600px" width="1815" height="276" viewBox="0 600 1815 276">
<line x1="924" y1="732.5" x2="1710" y2="732.5" stroke="#2e2e2e" stroke-width="1"/>
<line x1="924" y1="763.5" x2="1710" y2="763.5" stroke="#2e2e2e" stroke-width="1"/>
<line x1="924" y1="866.5" x2="1710" y2="866.5" stroke="#2e2e2e" stroke-width="1"/>
<line x1="924" y1="815.5" x2="1710" y2="815.5" stroke="#8c8c8c" stroke-width="1"/>
<path d="M1249 787 L1317 815 L1249 860 Z" fill="#2e210e"/>
<rect x="990" y="787" width="259" height="73.5" rx="3" fill="#8a5306"/>
<rect x="990" y="815" width="259" height="37" fill="#ff9800"/>
<g stroke="#ff9800" stroke-width="1.3" stroke-dasharray="3 2" fill="none"><path d="M1249 787 L1317 815 L1249 860.5"/></g>
<path d="M1383 764 L1317 815 L1383 859 Z" fill="#131b2c"/>
<rect x="1383" y="764" width="259" height="95" rx="3" fill="#22427f"/>
<rect x="1383" y="815" width="259" height="37" fill="#3179f5"/>
<g stroke="#3179f5" stroke-width="1.1" stroke-dasharray="3 2" fill="none"><path d="M1383 764 L1317 815 L1383 859"/></g>
<line x1="924" y1="815.5" x2="1710" y2="815.5" stroke="#8c8c8c" stroke-width="1"/>
<g stroke-width="1.3" stroke-dasharray="3 2" fill="none"><line x1="1249" y1="814.6" x2="1317" y2="814.6" stroke="#1a1a1a"/><line x1="1317" y1="814.6" x2="1383" y2="814.6" stroke="#1a1a1a"/></g>
<circle cx="1317" cy="815" r="3.5" fill="#8c8c8c"/>
<rect x="1129" y="778" width="55" height="18" rx="1" fill="#e07c1a"/>
<rect x="1185" y="778" width="64" height="18" rx="1" fill="#e07c1a"/>
<rect x="1129" y="843" width="55" height="17.5" rx="1" fill="#c96d17"/>
<rect x="1185" y="843" width="64" height="17.5" rx="1" fill="#c96d17"/>
<rect x="1129" y="861.5" width="55" height="20" rx="1" fill="#e07c1a"/>
<rect x="1185" y="861.5" width="64" height="20" rx="1" fill="#e07c1a"/>
<rect x="1383" y="755" width="55" height="18" rx="1" fill="#3179f5"/>
<rect x="1439" y="755" width="64" height="18" rx="1" fill="#3179f5"/>
<rect x="1383" y="843" width="55" height="17.5" rx="1" fill="#1f55e0"/>
<rect x="1439" y="843" width="64" height="17.5" rx="1" fill="#1f55e0"/>
<rect x="1383" y="861.5" width="55" height="20" rx="1" fill="#3179f5"/>
<rect x="1439" y="861.5" width="64" height="20" rx="1" fill="#3179f5"/>
</svg>
<div class="t" style="left:1135px;top:779.00px;font-size:13px;line-height:13px;font-weight:400;color:#ffffff;">Max</div>
<div class="t" style="right:572px;top:779.00px;font-size:13px;line-height:13px;font-weight:400;color:#ffffff;">54.11%</div>
<div class="t" style="left:1135px;top:845.00px;font-size:13px;line-height:13px;font-weight:400;color:#ffffff;">Current</div>
<div class="t" style="right:572px;top:845.00px;font-size:13px;line-height:13px;font-weight:400;color:#ffffff;">−73.79%</div>
<div class="t" style="left:1135px;top:863.00px;font-size:13px;line-height:13px;font-weight:400;color:#ffffff;">Min</div>
<div class="t" style="right:572px;top:863.00px;font-size:13px;line-height:13px;font-weight:400;color:#ffffff;">−90.86%</div>
<div class="t" style="left:1389px;top:756.00px;font-size:13px;line-height:13px;font-weight:400;color:#ffffff;">Max</div>
<div class="t" style="right:318px;top:756.00px;font-size:13px;line-height:13px;font-weight:400;color:#ffffff;">98.68%</div>
<div class="t" style="left:1389px;top:844.00px;font-size:13px;line-height:13px;font-weight:400;color:#ffffff;">Current</div>
<div class="t" style="right:318px;top:844.00px;font-size:13px;line-height:13px;font-weight:400;color:#ffffff;">−72.93%</div>
<div class="t" style="left:1389px;top:863.00px;font-size:13px;line-height:13px;font-weight:400;color:#ffffff;">Min</div>
<div class="t" style="right:318px;top:863.00px;font-size:13px;line-height:13px;font-weight:400;color:#ffffff;">−86.69%</div>
<div class="t" style="left:1720px;top:726.69px;font-size:11px;line-height:11px;font-weight:400;color:#b2b2b2;">160.00%</div>
<div class="t" style="left:1720px;top:757.69px;font-size:11px;line-height:11px;font-weight:400;color:#b2b2b2;">100.00%</div>
<div class="t" style="left:1720px;top:809.69px;font-size:11px;line-height:11px;font-weight:400;color:#b2b2b2;">0.00%</div>
<div class="t" style="left:1720px;top:860.69px;font-size:11px;line-height:11px;font-weight:400;color:#b2b2b2;">−100.00%</div>
</body></html>
